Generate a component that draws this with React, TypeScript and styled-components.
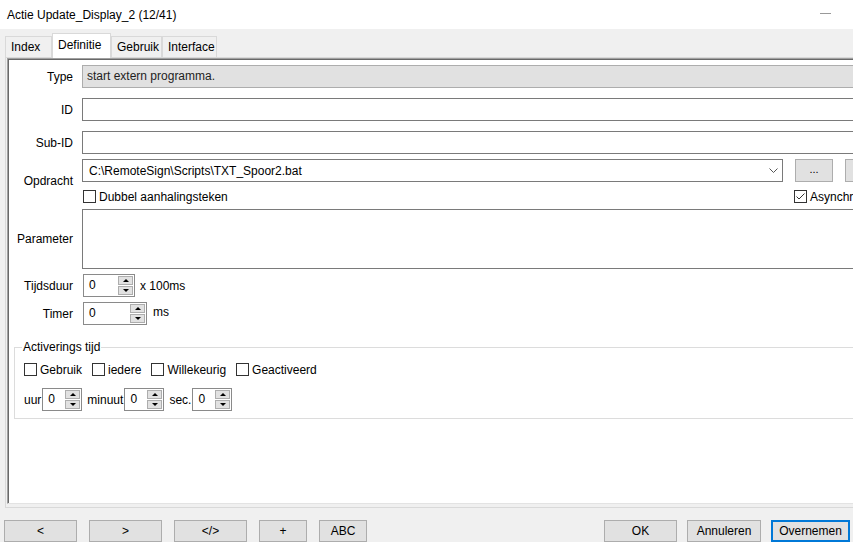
import styled, { createGlobalStyle } from "styled-components";

const GlobalStyle = createGlobalStyle`
  html, body {
    margin: 0;
    padding: 0;
    background: #f0f0f0;
  }
  body {
    font-family: "Liberation Sans", Arial, sans-serif;
    font-size: 12px;
    color: #000;
  }
  * {
    box-sizing: border-box;
  }
`;

const Window = styled.div`
  width: 853px;
  height: 542px;
  overflow: hidden;
  display: flex;
  flex-direction: column;
  background: #f0f0f0;
`;

const TitleBar = styled.div`
  height: 29px;
  flex: none;
  background: #fff;
  display: flex;
  align-items: center;
  justify-content: space-between;
  padding: 0 22px 0 7px;
`;

const MinimizeGlyph = styled.div`
  width: 11px;
  height: 1px;
  background: #999;
  margin-top: -2px;
`;

const Body = styled.div`
  flex: 1;
  min-height: 0;
  display: flex;
  flex-direction: column;
  padding: 4px 0 0 5px;
`;

const TabStrip = styled.div`
  height: 24px;
  flex: none;
  display: flex;
  align-items: flex-end;
  position: relative;
  z-index: 1;
`;

const Tab = styled.div<{ $w: number; $active?: boolean }>`
  width: ${(p) => p.$w}px;
  height: ${(p) => (p.$active ? 25 : 21)}px;
  margin-bottom: ${(p) => (p.$active ? -1 : 0)}px;
  background: ${(p) => (p.$active ? "#fff" : "#f0f0f0")};
  border: 1px solid #d9d9d9;
  border-bottom: none;
  padding-left: 5px;
  line-height: ${(p) => (p.$active ? 22 : 20)}px;
  white-space: nowrap;
`;

const TabPanel = styled.div`
  width: 940px;
  height: 451px;
  flex: none;
  display: flex;
  border: 1px solid #d9d9d9;
  padding: 0 0 3px 1px;
  background: #f0f0f0;
`;

const Page = styled.div`
  flex: 1;
  display: flex;
  flex-direction: column;
  background: #fff;
  border-top: 1px solid #a0a0a0;
  border-left: 1px solid #a0a0a0;
  border-bottom: 1px solid #e3e3e3;
  box-shadow: inset 1px 1px 0 #696969;
  padding: 6px 0 0 1px;
`;

const Row = styled.div<{ $mt: number }>`
  display: flex;
  align-items: center;
  margin-top: ${(p) => p.$mt}px;
`;

const Label = styled.div`
  width: 64px;
  flex: none;
  margin-right: 9px;
  text-align: right;
`;

const TextField = styled.div<{ $disabled?: boolean; $h?: number }>`
  flex: 1;
  height: ${(p) => p.$h ?? 23}px;
  border: 1px solid ${(p) => (p.$disabled ? "#adadad" : "#7a7a7a")};
  background: ${(p) => (p.$disabled ? "#e1e1e1" : "#fff")};
  padding-left: 4px;
  line-height: 21px;
  color: #1e1e1e;
`;

const CommandGrid = styled.div`
  display: grid;
  grid-template-columns: 701px 38px 38px;
  column-gap: 12px;
  row-gap: 8px;
  align-items: center;
`;

const Combo = styled.div`
  height: 23px;
  border: 1px solid #7a7a7a;
  background: #fff;
  display: flex;
  align-items: center;
  justify-content: space-between;
  padding: 0 4px 0 6px;
`;

const SmallButton = styled.div`
  height: 23px;
  border: 1px solid #adadad;
  background: #e1e1e1;
  display: flex;
  align-items: center;
  justify-content: center;
  font-size: 11px;
  padding-bottom: 3px;
`;

const CheckItem = styled.div<{ $ml?: number }>`
  display: flex;
  align-items: center;
  gap: 3px;
  height: 13px;
  margin-left: ${(p) => p.$ml ?? 0}px;
  white-space: nowrap;
`;

const Box = styled.span`
  width: 13px;
  height: 13px;
  flex: none;
  border: 1px solid #333;
  background: #fff;
  display: inline-flex;
  align-items: center;
  justify-content: center;
`;

const SpinBox = styled.div<{ $w: number; $ml?: number }>`
  width: ${(p) => p.$w}px;
  height: 23px;
  flex: none;
  margin-left: ${(p) => p.$ml ?? 0}px;
  display: flex;
  border: 1px solid #8a8a8a;
  background: #fff;
`;

const SpinValue = styled.div`
  flex: 1;
  padding-left: 5px;
  line-height: 21px;
`;

const SpinButtons = styled.div`
  width: 16px;
  flex: none;
  display: flex;
  flex-direction: column;
  gap: 1px;
  padding: 1px 1px 1px 0;
`;

const SpinButton = styled.div`
  flex: 1;
  background: #e1e1e1;
  border: 1px solid #adadad;
  display: flex;
  align-items: center;
  justify-content: center;
`;

const Arrow = styled.span<{ $up?: boolean }>`
  width: 0;
  height: 0;
  border-left: 3px solid transparent;
  border-right: 3px solid transparent;
  ${(p) => (p.$up ? "border-bottom: 3px solid #000;" : "border-top: 3px solid #000;")}
`;

const Unit = styled.span<{ $ml: number; $top?: boolean }>`
  margin-left: ${(p) => p.$ml}px;
  align-self: ${(p) => (p.$top ? "flex-start" : "center")};
  margin-top: ${(p) => (p.$top ? 3 : 0)}px;
`;

const GroupBox = styled.fieldset`
  margin: 15px 0 0 5px;
  border: 1px solid #dcdcdc;
  padding: 0 0 7px 9px;
  min-width: 0;

  legend {
    padding: 0 1px;
    margin-left: -2px;
    line-height: 14px;
  }
`;

const GroupRow = styled.div<{ $mt: number; $gap: number }>`
  display: flex;
  align-items: center;
  gap: ${(p) => p.$gap}px;
  margin-top: ${(p) => p.$mt}px;
`;

const TimePart = styled.div`
  display: flex;
  align-items: center;
  gap: 1px;
`;

const ButtonBar = styled.div`
  display: flex;
  justify-content: space-between;
  margin: 12px 3px 0 -1px;
`;

const ButtonGroup = styled.div<{ $gap: number }>`
  display: flex;
  gap: ${(p) => p.$gap}px;
`;

const Button = styled.div<{ $w: number; $primary?: boolean }>`
  width: ${(p) => p.$w}px;
  height: 22px;
  background: #e1e1e1;
  border: ${(p) => (p.$primary ? "2px solid #0078d7" : "1px solid #adadad")};
  display: flex;
  align-items: center;
  justify-content: center;
`;

function CheckBox({ label, checked, ml }: { label: string; checked?: boolean; ml?: number }) {
  return (
    <CheckItem $ml={ml}>
      <Box>
        {checked && (
          <svg width="11" height="11" viewBox="0 0 11 11">
            <polyline points="1.5,5.5 4,8 9.5,2.5" fill="none" stroke="#333" strokeWidth="1" />
          </svg>
        )}
      </Box>
      {label}
    </CheckItem>
  );
}

function Spin({ w, ml }: { w: number; ml?: number }) {
  return (
    <SpinBox $w={w} $ml={ml}>
      <SpinValue>0</SpinValue>
      <SpinButtons>
        <SpinButton>
          <Arrow $up />
        </SpinButton>
        <SpinButton>
          <Arrow />
        </SpinButton>
      </SpinButtons>
    </SpinBox>
  );
}

export default function App() {
  return (
    <>
      <GlobalStyle />
      <Window>
        <TitleBar>
          <span>Actie Update_Display_2 (12/41)</span>
          <MinimizeGlyph />
        </TitleBar>
        <Body>
          <TabStrip>
            <Tab $w={47}>Index</Tab>
            <Tab $w={59} $active>
              Definitie
            </Tab>
            <Tab $w={51}>Gebruik</Tab>
            <Tab $w={55}>Interface</Tab>
          </TabStrip>
          <TabPanel>
            <Page>
              <Row $mt={0}>
                <Label>Type</Label>
                <TextField $disabled>start extern programma.</TextField>
              </Row>
              <Row $mt={10}>
                <Label>ID</Label>
                <TextField />
              </Row>
              <Row $mt={10}>
                <Label>Sub-ID</Label>
                <TextField />
              </Row>
              <Row $mt={5}>
                <Label>Opdracht</Label>
                <CommandGrid>
                  <Combo>
                    <span>C:\RemoteSign\Scripts\TXT_Spoor2.bat</span>
                    <svg width="9" height="5" viewBox="0 0 9 5">
                      <polyline points="0.5,0.5 4.5,4.5 8.5,0.5" fill="none" stroke="#555" strokeWidth="1" />
                    </svg>
                  </Combo>
                  <SmallButton>...</SmallButton>
                  <SmallButton />
                  <CheckBox label="Dubbel aanhalingsteken" ml={1} />
                  <CheckBox label="Asynchroon" checked ml={-1} />
                </CommandGrid>
              </Row>
              <Row $mt={6}>
                <Label>Parameter</Label>
                <TextField $h={60} />
              </Row>
              <Row $mt={5}>
                <Label>Tijdsduur</Label>
                <Spin w={52} ml={1} />
                <Unit $ml={5}>x 100ms</Unit>
              </Row>
              <Row $mt={5}>
                <Label>Timer</Label>
                <Spin w={64} ml={1} />
                <Unit $ml={6} $top>
                  ms
                </Unit>
              </Row>
              <GroupBox>
                <legend>Activerings tijd</legend>
                <GroupRow $mt={9} $gap={10}>
                  <CheckBox label="Gebruik" />
                  <CheckBox label="iedere" />
                  <CheckBox label="Willekeurig" />
                  <CheckBox label="Geactiveerd" />
                </GroupRow>
                <GroupRow $mt={12} $gap={5}>
                  <TimePart>
                    uur
                    <Spin w={40} />
                  </TimePart>
                  <TimePart>
                    minuut
                    <Spin w={40} />
                  </TimePart>
                  <TimePart>
                    sec.
                    <Spin w={40} />
                  </TimePart>
                </GroupRow>
              </GroupBox>
            </Page>
          </TabPanel>
          <ButtonBar>
            <ButtonGroup $gap={12}>
              <Button $w={73}>&lt;</Button>
              <Button $w={73}>&gt;</Button>
              <Button $w={73}>&lt;/&gt;</Button>
              <Button $w={48}>+</Button>
              <Button $w={48}>ABC</Button>
            </ButtonGroup>
            <ButtonGroup $gap={10}>
              <Button $w={73}>OK</Button>
              <Button $w={74}>Annuleren</Button>
              <Button $w={79} $primary>
                Overnemen
              </Button>
            </ButtonGroup>
          </ButtonBar>
        </Body>
      </Window>
    </>
  );
}
